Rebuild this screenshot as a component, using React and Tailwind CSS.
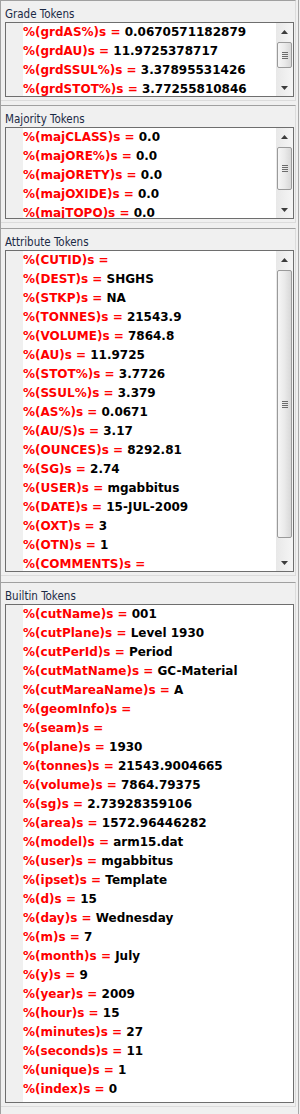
const grade = [
  ["grdAS%", "0.0670571182879"],
  ["grdAU", "11.9725378717"],
  ["grdSSUL%", "3.37895531426"],
  ["grdSTOT%", "3.77255810846"],
];

const majority = [
  ["majCLASS", "0.0"],
  ["majORE%", "0.0"],
  ["majORETY", "0.0"],
  ["majOXIDE", "0.0"],
  ["majTOPO", "0.0"],
];

const attributes = [
  ["CUTID", ""],
  ["DEST", "SHGHS"],
  ["STKP", "NA"],
  ["TONNES", "21543.9"],
  ["VOLUME", "7864.8"],
  ["AU", "11.9725"],
  ["STOT%", "3.7726"],
  ["SSUL%", "3.379"],
  ["AS%", "0.0671"],
  ["AU/S", "3.17"],
  ["OUNCES", "8292.81"],
  ["SG", "2.74"],
  ["USER", "mgabbitus"],
  ["DATE", "15-JUL-2009"],
  ["OXT", "3"],
  ["OTN", "1"],
  ["COMMENTS", ""],
];

const builtin = [
  ["cutName", "001"],
  ["cutPlane", "Level 1930"],
  ["cutPerId", "Period"],
  ["cutMatName", "GC-Material"],
  ["cutMareaName", "A"],
  ["geomInfo", ""],
  ["seam", ""],
  ["plane", "1930"],
  ["tonnes", "21543.9004665"],
  ["volume", "7864.79375"],
  ["sg", "2.73928359106"],
  ["area", "1572.96446282"],
  ["model", "arm15.dat"],
  ["user", "mgabbitus"],
  ["ipset", "Template"],
  ["d", "15"],
  ["day", "Wednesday"],
  ["m", "7"],
  ["month", "July"],
  ["y", "9"],
  ["year", "2009"],
  ["hour", "15"],
  ["minutes", "27"],
  ["seconds", "11"],
  ["unique", "1"],
  ["index", "0"],
];

function Arrow({ up }) {
  return (
    <div className="h-[17px] flex items-center justify-center">
      <svg width="7" height="4" viewBox="0 0 7 4">
        {up ? <path d="M3.5 0 L7 4 L0 4 Z" fill="#3c3c3c" /> : <path d="M0 0 L7 0 L3.5 4 Z" fill="#3c3c3c" />}
      </svg>
    </div>
  );
}

function ScrollBar({ thumb }) {
  return (
    <div className="w-[17px] shrink-0 flex flex-col bg-gradient-to-r from-[#e8e8e8] to-[#f5f5f5]">
      <Arrow up />
      <div className="flex-1 pt-[2px]">
        <div
          className="mx-[1px] rounded-[2px] border border-[#9a9a9a] bg-gradient-to-r from-[#f6f6f6] via-[#eaeaea] to-[#d8d8d8] flex flex-col items-center justify-center gap-[1px]"
          style={{ height: thumb }}
        >
          <div className="w-[6px] h-[1px] bg-[#6b6b6b]" />
          <div className="w-[6px] h-[1px] bg-[#6b6b6b]" />
          <div className="w-[6px] h-[1px] bg-[#6b6b6b]" />
          <div className="w-[6px] h-[1px] bg-[#6b6b6b]" />
        </div>
      </div>
      <Arrow />
    </div>
  );
}

function Panel({ title, rows, height, thumb }) {
  return (
    <div className="border-t border-b border-r border-t-[#a0a0a0] border-b-[#dcdcdc] border-r-[#dcdcdc] pb-[3px]">
      <div className="h-[21px] pt-[7px] pl-[4px] text-[11.5px] leading-[13px] text-[#1b2a45] font-['DejaVu_Sans_Condensed','DejaVu_Sans',sans-serif]">
        {title}
      </div>
      <div className="ml-[4px] w-[289px] border border-[#6e6e6e] bg-white flex overflow-hidden" style={{ height }}>
        <div className="w-[17px] shrink-0 bg-[#f0f0f0]" />
        <div className="flex-1 overflow-hidden font-['DejaVu_Sans',sans-serif] font-bold text-[12px]">
          {rows.map(([k, v]) => (
            <div key={k} className="h-[19px] leading-[19px] whitespace-nowrap">
              <span className="text-[#ff0000]">%({k})s = </span>
              <span className="text-black">{v}</span>
            </div>
          ))}
        </div>
        {thumb ? <ScrollBar thumb={thumb} /> : null}
      </div>
    </div>
  );
}

export default function App() {
  return (
    <div className="w-[300px] h-[1114px] bg-[#f0f0f0] border-l border-[#a0a0a0] flex overflow-hidden">
      <div className="w-[295px] flex flex-col">
        <Panel title="Grade Tokens" rows={grade} height={75} thumb={26} />
        <div className="h-[4px]" />
        <Panel title="Majority Tokens" rows={majority} height={92} thumb={43} />
        <div className="h-[5px]" />
        <Panel title="Attribute Tokens" rows={attributes} height={322} thumb={268} />
        <div className="h-[6px]" />
        <Panel title="Builtin Tokens" rows={builtin} height={499} />
      </div>
      <div className="w-[2px]" />
      <div className="w-[1px] bg-[#a8a8a8]" />
    </div>
  );
}
